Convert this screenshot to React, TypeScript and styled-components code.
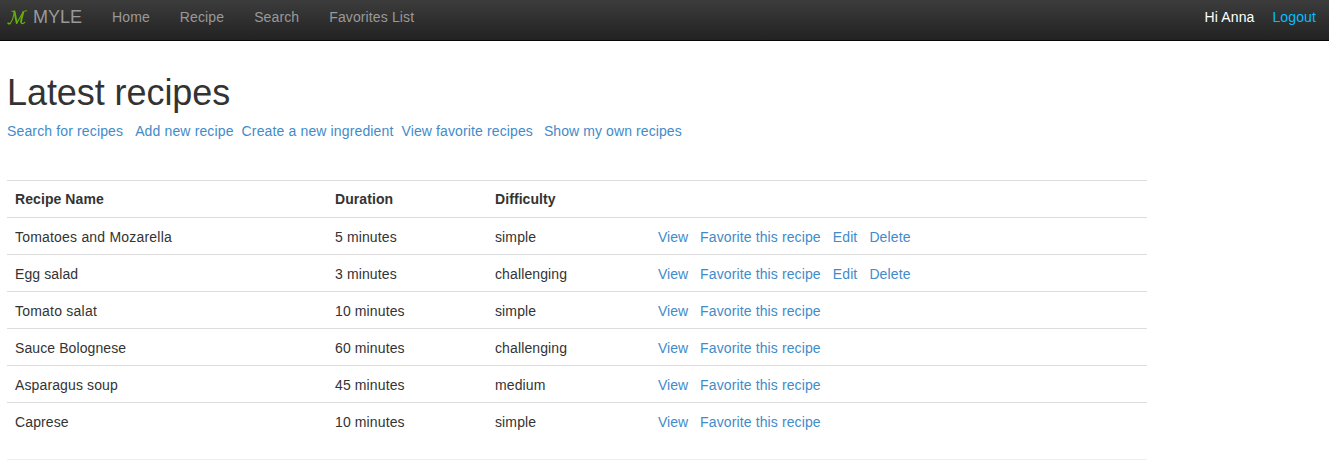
import React from 'react';
import styled, { createGlobalStyle } from 'styled-components';

const GlobalStyle = createGlobalStyle`
  * { box-sizing: border-box; }
  body {
    margin: 0;
    background: #fff;
    color: #333;
    font: 14px/20px "Liberation Sans", Arial, sans-serif;
    letter-spacing: 0.12px;
    overflow: hidden;
  }
`;

const Navbar = styled.nav`
  display: flex;
  align-items: flex-start;
  height: 41px;
  padding: 7px 13px 0 7px;
  background: linear-gradient(to bottom, #3c3c3c 0%, #222 100%);
  border-bottom: 1px solid #080808;
  white-space: nowrap;
`;

const Brand = styled.a`
  display: flex;
  width: 105px;
  color: #999;
  font-size: 18px;
  letter-spacing: 0;
`;

const Logo = styled.svg`
  width: 21px;
  height: 20px;
  margin-right: 5px;
`;

const NavItem = styled.a<{ $gap?: number; $color?: string }>`
  margin-right: ${(p) => p.$gap ?? 30}px;
  color: ${(p) => p.$color ?? '#999'};
`;

const Account = styled.div`
  display: flex;
  gap: 18px;
  margin-left: auto;
`;

const Page = styled.main`
  padding: 32px 7px 0;
`;

const Title = styled.h1`
  margin: 0;
  font-size: 36px;
  font-weight: 500;
  line-height: 40px;
  letter-spacing: -0.07px;
`;

const Links = styled.div`
  display: flex;
  margin-top: 8px;
  height: 59px;
  white-space: nowrap;
`;

const Link = styled.a<{ $gap?: number; $tracking?: number }>`
  color: #428bca;
  letter-spacing: ${(p) => p.$tracking ?? 0.12}px;
  margin-right: ${(p) => p.$gap ?? 12}px;
`;

const Table = styled.table`
  width: 1140px;
  table-layout: fixed;
  border-collapse: collapse;
`;

const HeadCell = styled.th<{ $width?: number }>`
  width: ${(p) => (p.$width ? `${p.$width}px` : 'auto')};
  height: 37px;
  padding: 8px;
  border-top: 1px solid #ddd;
  letter-spacing: 0.08px;
  text-align: left;
`;

const Cell = styled.td<{ $indent?: number; $tracking?: number }>`
  height: 37px;
  padding: 9px 8px 7px ${(p) => p.$indent ?? 8}px;
  border-top: 1px solid #ddd;
  letter-spacing: ${(p) => p.$tracking ?? 0.12}px;
  white-space: nowrap;
`;

const Divider = styled.hr`
  width: 1140px;
  margin: 19px 0 0;
  border: 0;
  border-top: 1px solid #eee;
`;

const recipes = [
  { name: 'Tomatoes and Mozarella', tracking: 0.2, duration: '5 minutes', difficulty: 'simple', own: true },
  { name: 'Egg salad', tracking: 0.1, duration: '3 minutes', difficulty: 'challenging', own: true },
  { name: 'Tomato salat', tracking: 0.22, duration: '10 minutes', difficulty: 'simple', own: false },
  { name: 'Sauce Bolognese', tracking: 0.09, duration: '60 minutes', difficulty: 'challenging', own: false },
  { name: 'Asparagus soup', tracking: 0.12, duration: '45 minutes', difficulty: 'medium', own: false },
  { name: 'Caprese', tracking: 0.12, duration: '10 minutes', difficulty: 'simple', own: false },
];

export default function App() {
  return (
    <>
      <GlobalStyle />
      <Navbar>
        <Brand>
          <Logo viewBox="0 0 21 20" fill="none" stroke="#66b00a" strokeLinecap="round" strokeLinejoin="round">
            <path strokeWidth="1.1" d="M5 4.2H7.4C6.8 8.6 5.3 13.8 3.4 16.2C2.4 17.4 0.9 17.3 1 15.8M9.6 16.4L16.2 5C16.7 4.2 18 3.9 19.6 3.8" />
            <path strokeWidth="1.9" d="M7.5 4.5L9.7 15.8M16.3 5.2C15.2 8.8 14.3 12 14.1 14.8" />
            <path strokeWidth="1.2" d="M14.1 14.8C14 17.2 15.8 17.2 17.8 15.4M1.2 16.4L3 16.6" />
          </Logo>
          MYLE
        </Brand>
        <NavItem>Home</NavItem>
        <NavItem>Recipe</NavItem>
        <NavItem>Search</NavItem>
        <NavItem>Favorites List</NavItem>
        <Account>
          <NavItem $gap={0} $color="#fff">Hi Anna</NavItem>
          <NavItem $gap={0} $color="#00bfff">Logout</NavItem>
        </Account>
      </Navbar>
      <Page>
        <Title>Latest recipes</Title>
        <Links>
          <Link $tracking={0.14}>Search for recipes</Link>
          <Link $gap={8} $tracking={0.14}>Add new recipe</Link>
          <Link $gap={8} $tracking={0.14}>Create a new ingredient</Link>
          <Link $gap={11}>View favorite recipes</Link>
          <Link $tracking={0.09}>Show my own recipes</Link>
        </Links>
        <Table>
          <thead>
            <tr>
              <HeadCell $width={320}>Recipe Name</HeadCell>
              <HeadCell $width={160}>Duration</HeadCell>
              <HeadCell $width={160}>Difficulty</HeadCell>
              <HeadCell />
            </tr>
          </thead>
          <tbody>
            {recipes.map((r) => (
              <tr key={r.name}>
                <Cell $tracking={r.tracking}>{r.name}</Cell>
                <Cell>{r.duration}</Cell>
                <Cell>{r.difficulty}</Cell>
                <Cell $indent={11}>
                  <Link $tracking={0}>View</Link>
                  <Link>Favorite this recipe</Link>
                  {r.own && <Link>Edit</Link>}
                  {r.own && <Link>Delete</Link>}
                </Cell>
              </tr>
            ))}
          </tbody>
        </Table>
        <Divider />
      </Page>
    </>
  );
}
